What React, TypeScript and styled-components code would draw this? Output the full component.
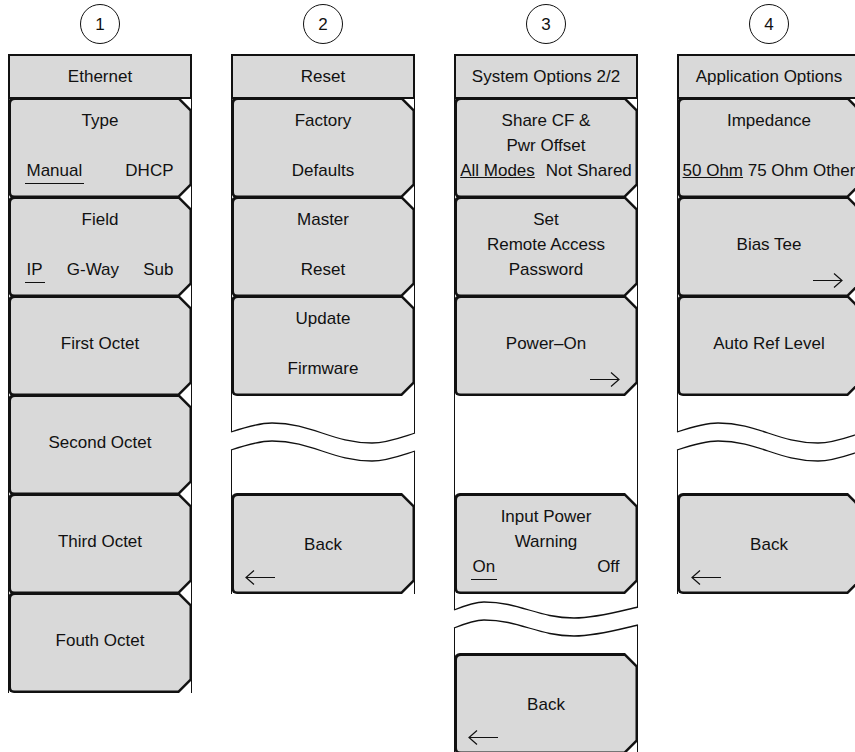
import React from "react";
import styled, { createGlobalStyle } from "styled-components";

const INK = "#111";
const KEY_FILL = "#d9d9d9";
const COL_W = 184;

const GlobalStyle = createGlobalStyle`
  html, body {
    margin: 0;
    padding: 0;
    background: #fff;
  }
`;

const Page = styled.main`
  box-sizing: border-box;
  width: 855px;
  height: 752px;
  overflow: hidden;
  padding: 4px 0 0 8px;
  display: flex;
  align-items: flex-start;
  gap: 39px;
  font-family: "Liberation Sans", Arial, sans-serif;
  font-size: 17px;
  color: ${INK};
`;

const Column = styled.section`
  flex: none;
  width: ${COL_W}px;
  display: flex;
  flex-direction: column;
`;

const Badge = styled.div`
  align-self: center;
  box-sizing: border-box;
  width: 40px;
  height: 40px;
  margin-bottom: 10px;
  border: 1.3px solid ${INK};
  border-radius: 50%;
  display: flex;
  align-items: center;
  justify-content: center;
  line-height: 1;
`;

const Title = styled.header`
  box-sizing: border-box;
  height: 45px;
  margin-bottom: -2px;
  border: 2.5px solid ${INK};
  background: ${KEY_FILL};
  display: flex;
  align-items: center;
  justify-content: center;
  white-space: nowrap;
`;

// one slot of the key stack; its side borders are the thin frame of the menu
const Slot = styled.div<{ $h?: number; $top?: number }>`
  box-sizing: border-box;
  height: ${(p) => p.$h ?? 101}px;
  margin-bottom: -2px;
  padding-top: ${(p) => p.$top ?? 0}px;
  border-left: 1px solid ${INK};
  border-right: 1px solid ${INK};
`;

const Face = styled.div`
  box-sizing: border-box;
  height: 100%;
  margin: 0 -1px;
  padding: 2.5px;
  background: ${INK};
  border-radius: 6px 0 0 6px;
  clip-path: polygon(
    0 0,
    calc(100% - 13px) 0,
    100% 13px,
    100% calc(100% - 13px),
    calc(100% - 13px) 100%,
    0 100%
  );
`;

const Fill = styled.div`
  box-sizing: border-box;
  height: 100%;
  padding-top: 8.5px;
  background: ${KEY_FILL};
  border-radius: 4px 0 0 4px;
  clip-path: polygon(
    0 0,
    calc(100% - 11.5px) 0,
    100% 11.5px,
    100% calc(100% - 11.5px),
    calc(100% - 11.5px) 100%,
    0 100%
  );
  display: grid;
  grid-template-columns: minmax(0, 1fr);
  grid-template-rows: repeat(3, 25px);
  line-height: 25px;
  text-align: center;
  white-space: nowrap;
`;

const Line = styled.div<{ $row: number; $drop?: number }>`
  grid-row: ${(p) => p.$row};
  grid-column: 1;
  margin-top: ${(p) => p.$drop ?? 0}px;
`;

const Choices = styled.div<{ $spread?: boolean; $gap?: number }>`
  grid-row: 3;
  grid-column: 1;
  display: flex;
  justify-content: ${(p) => (p.$spread ? "space-between" : "center")};
  gap: ${(p) => p.$gap ?? 4.7}px;
  padding: 0 ${(p) => (p.$spread ? 14 : 0)}px;
`;

const Choice = styled.span<{ $mark?: "gap" | "tight" }>`
  box-sizing: border-box;
  ${(p) =>
    p.$mark === "gap" &&
    `
    height: 26px;
    padding: 0 2px;
    border-bottom: 1.4px solid ${INK};
  `}
  ${(p) =>
    p.$mark === "tight" &&
    `
    text-decoration: underline;
    text-decoration-thickness: 1.3px;
  `}
  ${(p) => !p.$mark && `padding: 0 2px;`}
`;

const ArrowIcon = styled.svg<{ $dir: "left" | "right" }>`
  grid-row: 3;
  grid-column: 1;
  align-self: end;
  justify-self: ${(p) => (p.$dir === "left" ? "start" : "end")};
  margin: 0 ${(p) => (p.$dir === "right" ? 16 : 0)}px -6px
    ${(p) => (p.$dir === "left" ? 11 : 0)}px;
  width: 30px;
  height: 15px;
  overflow: visible;
`;

const BreakMark = styled.svg`
  display: block;
  margin: 0 -1px;
  overflow: visible;
`;

type WaveShape = {
  l: number;
  px: number;
  py: number;
  tx: number;
  ty: number;
  r: number;
  h: number;
};

const SOFT_WAVE: WaveShape = { l: 10, px: 41, py: 1, tx: 141, ty: 21, r: 11, h: 40 };
const TIGHT_WAVE: WaveShape = { l: 9, px: 30, py: 1, tx: 120, ty: 17, r: 6, h: 36 };
const BAND = 18;

const wavePoints = (s: WaveShape, dy: number) => {
  const W = COL_W;
  const y = (v: number) => v + dy;
  return [
    [0, y(s.l)],
    [s.px * 0.4, y(s.py + (s.l - s.py) * 0.4)],
    [s.px * 0.7, y(s.py)],
    [s.px, y(s.py)],
    [s.px + (s.tx - s.px) * 0.4, y(s.py)],
    [s.px + (s.tx - s.px) * 0.6, y(s.ty)],
    [s.tx, y(s.ty)],
    [s.tx + (W - s.tx) * 0.35, y(s.ty)],
    [s.tx + (W - s.tx) * 0.7, y(s.r + (s.ty - s.r) * 0.4)],
    [W, y(s.r)],
  ];
};

const trace = (pts: number[][], lead: "M" | "L") => {
  const f = (p: number[]) => `${p[0].toFixed(1)},${p[1].toFixed(1)}`;
  let d = `${lead}${f(pts[0])}`;
  for (let i = 1; i < pts.length; i += 3) {
    d += ` C${f(pts[i])} ${f(pts[i + 1])} ${f(pts[i + 2])}`;
  }
  return d;
};

const Wave: React.FC<{ shape: WaveShape }> = ({ shape }) => {
  const top = wavePoints(shape, 0);
  const bottom = wavePoints(shape, BAND);
  const band = `${trace(top, "M")} ${trace([...bottom].reverse(), "L")} Z`;
  return (
    <BreakMark width={COL_W} height={shape.h} viewBox={`0 0 ${COL_W} ${shape.h}`}>
      <path d={band} fill="#fff" />
      <path d={trace(top, "M")} fill="none" stroke={INK} strokeWidth={1.3} />
      <path d={trace(bottom, "M")} fill="none" stroke={INK} strokeWidth={1.3} />
    </BreakMark>
  );
};

const Arrow: React.FC<{ dir: "left" | "right" }> = ({ dir }) => (
  <ArrowIcon $dir={dir} viewBox="0 0 30 15">
    <path
      d={dir === "left" ? "M1 7.5H30 M9 0.5L1 7.5L9 14.5" : "M0 7.5H29 M21 0.5L29 7.5L21 14.5"}
      fill="none"
      stroke={INK}
      strokeWidth={1.2}
    />
  </ArrowIcon>
);

const SoftKey: React.FC<{ children: React.ReactNode }> = ({ children }) => (
  <Slot>
    <Face>
      <Fill>{children}</Fill>
    </Face>
  </Slot>
);

const Gap: React.FC<{ h?: number; top?: number; wave?: WaveShape }> = ({ h, top, wave }) => (
  <Slot $h={h} $top={top}>
    {wave && <Wave shape={wave} />}
  </Slot>
);

const BackKey = () => (
  <SoftKey>
    <Line $row={2} $drop={3}>
      Back
    </Line>
    <Arrow dir="left" />
  </SoftKey>
);

const App: React.FC = () => (
  <>
    <GlobalStyle />
    <Page>
      <Column>
        <Badge>1</Badge>
        <Title>Ethernet</Title>
        <SoftKey>
          <Line $row={1}>Type</Line>
          <Choices $spread>
            <Choice $mark="gap">Manual</Choice>
            <Choice>DHCP</Choice>
          </Choices>
        </SoftKey>
        <SoftKey>
          <Line $row={1}>Field</Line>
          <Choices $spread>
            <Choice $mark="gap">IP</Choice>
            <Choice>G-Way</Choice>
            <Choice>Sub</Choice>
          </Choices>
        </SoftKey>
        <SoftKey>
          <Line $row={2}>First Octet</Line>
        </SoftKey>
        <SoftKey>
          <Line $row={2}>Second Octet</Line>
        </SoftKey>
        <SoftKey>
          <Line $row={2}>Third Octet</Line>
        </SoftKey>
        <SoftKey>
          <Line $row={2}>Fouth Octet</Line>
        </SoftKey>
      </Column>

      <Column>
        <Badge>2</Badge>
        <Title>Reset</Title>
        <SoftKey>
          <Line $row={1}>Factory</Line>
          <Line $row={3}>Defaults</Line>
        </SoftKey>
        <SoftKey>
          <Line $row={1}>Master</Line>
          <Line $row={3}>Reset</Line>
        </SoftKey>
        <SoftKey>
          <Line $row={1}>Update</Line>
          <Line $row={3}>Firmware</Line>
        </SoftKey>
        <Gap top={28} wave={SOFT_WAVE} />
        <BackKey />
      </Column>

      <Column>
        <Badge>3</Badge>
        <Title>System Options 2/2</Title>
        <SoftKey>
          <Line $row={1}>Share CF &amp;</Line>
          <Line $row={2}>Pwr Offset</Line>
          <Choices $gap={11}>
            <Choice $mark="tight">All Modes</Choice>
            <span>Not Shared</span>
          </Choices>
        </SoftKey>
        <SoftKey>
          <Line $row={1}>Set</Line>
          <Line $row={2}>Remote Access</Line>
          <Line $row={3}>Password</Line>
        </SoftKey>
        <SoftKey>
          <Line $row={2}>Power–On</Line>
          <Arrow dir="right" />
        </SoftKey>
        <Gap />
        <SoftKey>
          <Line $row={1}>Input Power</Line>
          <Line $row={2}>Warning</Line>
          <Choices $spread>
            <Choice $mark="gap">On</Choice>
            <Choice>Off</Choice>
          </Choices>
        </SoftKey>
        <Gap h={63} top={9} wave={TIGHT_WAVE} />
        <BackKey />
      </Column>

      <Column>
        <Badge>4</Badge>
        <Title>Application Options</Title>
        <SoftKey>
          <Line $row={1}>Impedance</Line>
          <Choices>
            <Choice $mark="tight">50 Ohm</Choice>
            <span>75 Ohm</span>
            <span>Other</span>
          </Choices>
        </SoftKey>
        <SoftKey>
          <Line $row={2}>Bias Tee</Line>
          <Arrow dir="right" />
        </SoftKey>
        <SoftKey>
          <Line $row={2}>Auto Ref Level</Line>
        </SoftKey>
        <Gap top={28} wave={SOFT_WAVE} />
        <BackKey />
      </Column>
    </Page>
  </>
);

export default App;
